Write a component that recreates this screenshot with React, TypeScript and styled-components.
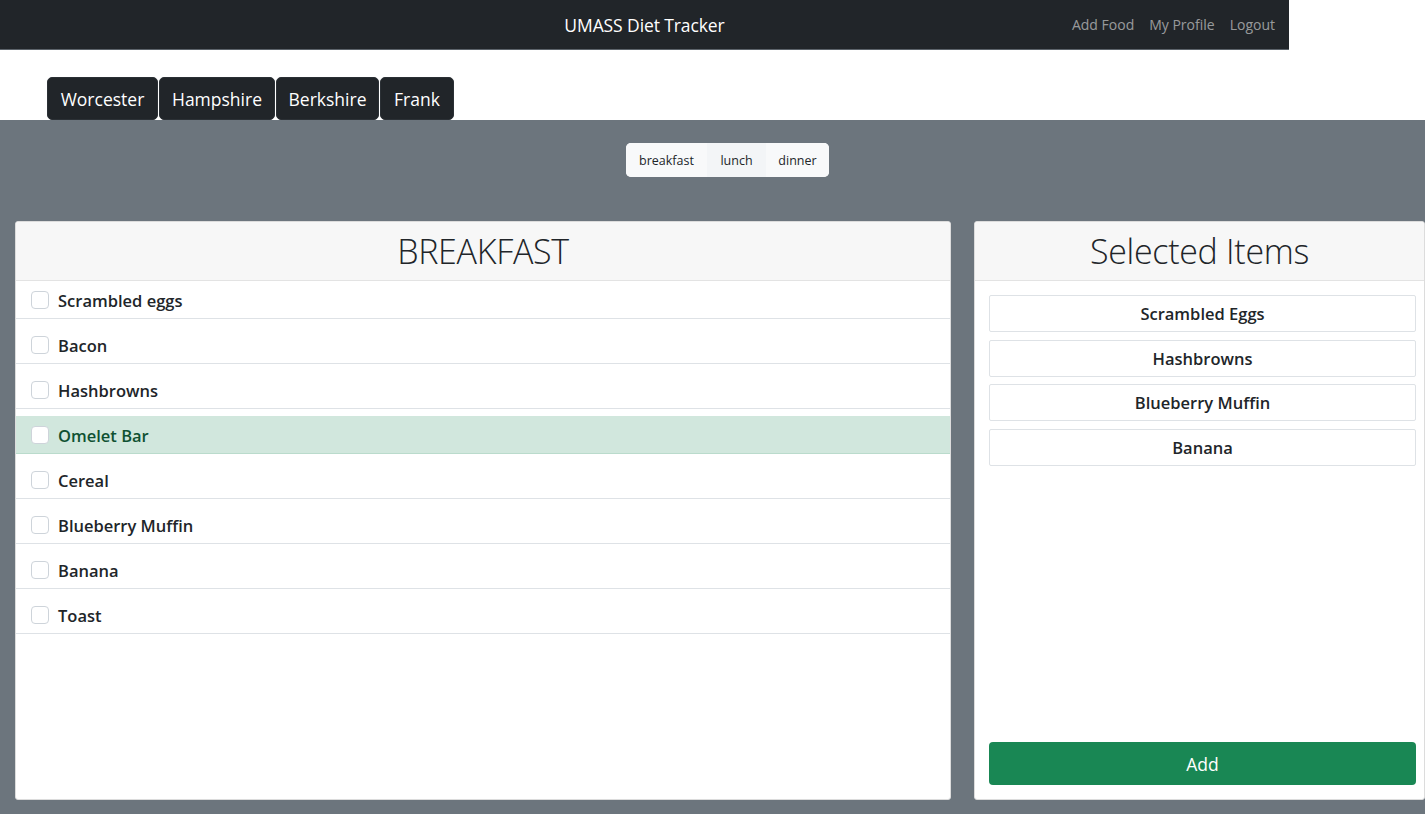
import React from "react";
import styled, { createGlobalStyle } from "styled-components";

const Global = createGlobalStyle`
  html, body { margin: 0; padding: 0; background: #fff; }
  body { font-family: "Open Sans", "Noto Sans", "Liberation Sans", sans-serif; color: #212529; }
  * { box-sizing: border-box; }
`;

const Page = styled.div`
  width: 1425px;
  min-height: 814px;
  display: flex;
  flex-direction: column;
`;

const NavBar = styled.nav`
  width: 1289px;
  height: 50px;
  background: #212529;
  border-bottom: 1px solid #5c636a;
  display: grid;
  grid-template-columns: 1fr auto 1fr;
  align-items: center;
  padding: 0 14px;
`;

const Brand = styled.div`
  grid-column: 2;
  color: #fff;
  font-size: 17.5px;
  letter-spacing: -0.1px;
`;

const NavLinks = styled.div`
  grid-column: 3;
  justify-self: end;
  display: flex;
  gap: 15px;
`;

const NavLink = styled.a`
  color: rgba(255, 255, 255, 0.55);
  font-size: 14px;
  text-decoration: none;
`;

const TabRow = styled.div`
  display: flex;
  gap: 1px;
  padding: 27px 0 0 47px;
  height: 70px;
  align-items: flex-end;
`;

const Tab = styled.button<{ $w: number }>`
  width: ${(p) => p.$w}px;
  height: 43px;
  background: #212529;
  color: #fff;
  border: 1px solid #2b3035;
  border-radius: 5px;
  font-family: inherit;
  font-size: 17.5px;
  padding: 0;
`;

const Stage = styled.main`
  background: #6c757d;
  flex: 1;
  display: flex;
  flex-direction: column;
  padding: 23px 0 14px 15px;
`;

const MealGroup = styled.div`
  align-self: center;
  margin-left: 15px;
  display: flex;
  background: #f8f9fa;
  border-radius: 5px;
  height: 34px;
  overflow: hidden;
`;

const MealBtn = styled.button<{ $w: number; $alt?: boolean }>`
  width: ${(p) => p.$w}px;
  border: none;
  background: ${(p) => (p.$alt ? "#f3f5f7" : "#f8f9fa")};
  color: #212529;
  font-family: inherit;
  font-size: 12.5px;
  padding: 0;
`;

const Columns = styled.div`
  margin-top: 44px;
  display: grid;
  grid-template-columns: 936px 451px;
  gap: 23px;
  height: 579px;
`;

const Card = styled.section`
  background: #fff;
  border: 1px solid #dcdcdc;
  border-radius: 3px;
  display: flex;
  flex-direction: column;
  overflow: hidden;
`;

const CardHeader = styled.header`
  height: 59px;
  background: #f7f7f7;
  border-bottom: 1px solid #e3e3e3;
  display: flex;
  align-items: center;
  justify-content: center;
  font-weight: 300;
  font-size: 34px;
  letter-spacing: -0.3px;
  color: #212529;
`;

const List = styled.div`
  display: flex;
  flex-direction: column;
  gap: 7px;
`;

const Row = styled.label<{ $active?: boolean }>`
  height: 38px;
  display: flex;
  align-items: center;
  gap: 9px;
  padding-left: 15px;
  padding-top: 1px;
  background: ${(p) => (p.$active ? "#d1e7dd" : "#fff")};
  color: ${(p) => (p.$active ? "#0f5132" : "#212529")};
  border-bottom: 1px solid ${(p) => (p.$active ? "#badbcc" : "#dee2e6")};
  font-size: 16.5px;
  font-weight: 600;
`;

const Box = styled.span`
  width: 18px;
  height: 18px;
  border: 1px solid #ced4da;
  border-radius: 4px;
  background: #fff;
  flex: none;
`;

const SelBody = styled.div`
  flex: 1;
  display: flex;
  flex-direction: column;
  padding: 14px 8px 14px 14px;
`;

const SelList = styled.div`
  display: flex;
  flex-direction: column;
  gap: 7.5px;
  flex: 1;
`;

const SelItem = styled.div`
  height: 37px;
  border: 1px solid #dee2e6;
  border-radius: 2px;
  display: flex;
  align-items: center;
  justify-content: center;
  font-size: 16.5px;
  font-weight: 600;
  color: #212529;
`;

const AddButton = styled.button`
  height: 43px;
  width: 100%;
  background: #198754;
  border: none;
  border-radius: 4px;
  color: #fff;
  font-family: inherit;
  font-size: 17.5px;
`;

const foods = [
  "Scrambled eggs",
  "Bacon",
  "Hashbrowns",
  "Omelet Bar",
  "Cereal",
  "Blueberry Muffin",
  "Banana",
  "Toast",
];

const selected = ["Scrambled Eggs", "Hashbrowns", "Blueberry Muffin", "Banana"];

const tabs: [string, number][] = [
  ["Worcester", 111],
  ["Hampshire", 116],
  ["Berkshire", 103],
  ["Frank", 74],
];

export default function App() {
  return (
    <>
      <Global />
      <Page>
        <NavBar>
          <Brand>UMASS Diet Tracker</Brand>
          <NavLinks>
            <NavLink>Add Food</NavLink>
            <NavLink>My Profile</NavLink>
            <NavLink>Logout</NavLink>
          </NavLinks>
        </NavBar>
        <TabRow>
          {tabs.map(([t, w]) => (
            <Tab key={t} $w={w}>
              {t}
            </Tab>
          ))}
        </TabRow>
        <Stage>
          <MealGroup>
            <MealBtn $w={81}>breakfast</MealBtn>
            <MealBtn $w={59} $alt>
              lunch
            </MealBtn>
            <MealBtn $w={63}>dinner</MealBtn>
          </MealGroup>
          <Columns>
            <Card>
              <CardHeader>BREAKFAST</CardHeader>
              <List>
                {foods.map((f) => (
                  <Row key={f} $active={f === "Omelet Bar"}>
                    <Box />
                    {f}
                  </Row>
                ))}
              </List>
            </Card>
            <Card>
              <CardHeader>Selected Items</CardHeader>
              <SelBody>
                <SelList>
                  {selected.map((s) => (
                    <SelItem key={s}>{s}</SelItem>
                  ))}
                </SelList>
                <AddButton>Add</AddButton>
              </SelBody>
            </Card>
          </Columns>
        </Stage>
      </Page>
    </>
  );
}
